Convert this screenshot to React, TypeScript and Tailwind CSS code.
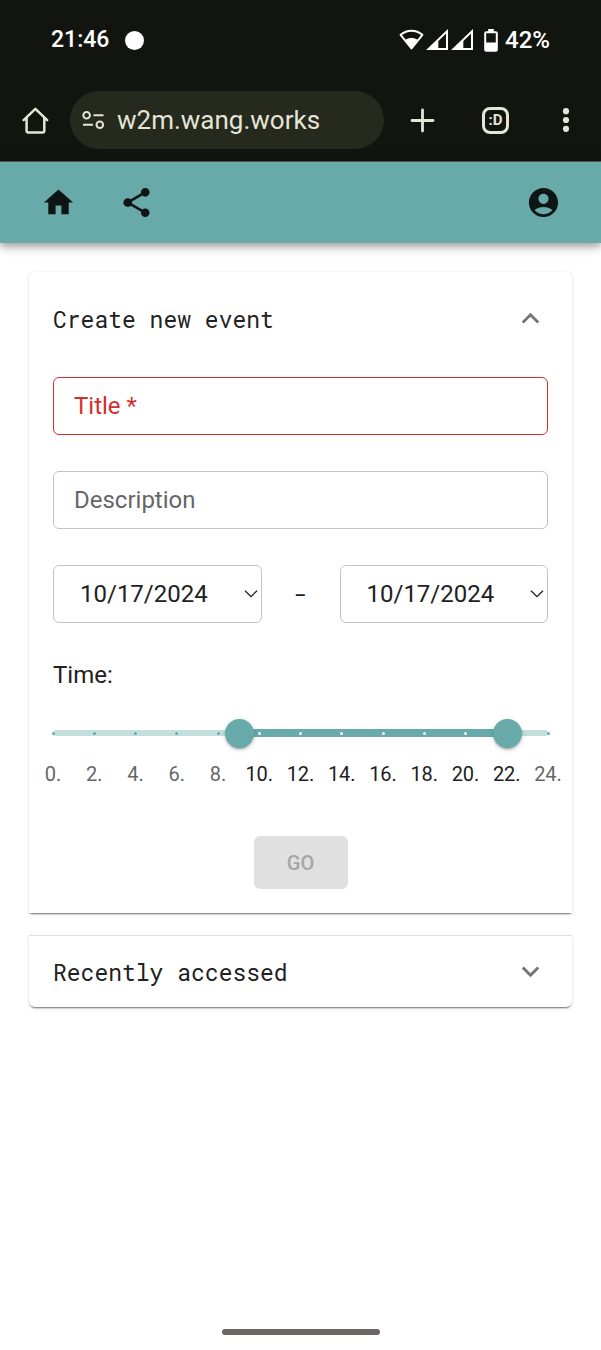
import { useState, type ReactNode } from "react";

const HOURS = [0, 2, 4, 6, 8, 10, 12, 14, 16, 18, 20, 22, 24];
const DATES = ["10/17/2024", "10/18/2024", "10/19/2024"];

function StatusBar() {
  return (
    <div className="flex h-20 items-center justify-between px-[51px] text-[23px] leading-8 font-medium text-white">
      <div className="flex items-center gap-4">
        <span>21:46</span>
        <span className="size-[19px] rounded-full bg-white" />
      </div>
      <div className="flex items-center">
        <svg className="h-[22px] w-[25px]" viewBox="0 0 25 22" aria-hidden="true">
          <path d="M1.6 5.8C8 .4 17 .4 23.4 5.8L12.500 19.500z" fill="none" stroke="#fff" strokeWidth="2" strokeLinejoin="round" />
          <path d="M6.400 10.800C9.800 8.400 15.200 8.400 18.600 10.800L12.500 19.500z" fill="#fff" />
        </svg>
        <SignalIcon />
        <SignalIcon />
        <svg className="ml-[10px] h-[23px] w-[14px]" viewBox="0 0 14 23" aria-hidden="true">
          <path d="M4.2 0h5.6v3H4.2z" fill="#fff" />
          <rect x="1.2" y="3.2" width="11.6" height="18.6" rx="1" fill="none" stroke="#fff" strokeWidth="2" />
          <path d="M1 13.5h12v8.3H1z" fill="#fff" />
        </svg>
        <span className="ml-[7px] text-[24px]">42%</span>
      </div>
    </div>
  );
}

function SignalIcon() {
  return (
    <svg className="ml-[2px] h-[22px] w-[23px]" viewBox="0 0 23 22" aria-hidden="true">
      <path d="M2.600 20 21 2.400V20z" fill="none" stroke="#fff" strokeWidth="2" />
      <path d="M1.500 20.500 12.300 10.500V20.500z" fill="#fff" />
    </svg>
  );
}

function BrowserBar() {
  return (
    <div className="flex items-center pt-[11px] pr-[22px] pb-3 pl-[20px] text-[#e4e5d6]">
      <button type="button" aria-label="Home page" className="mr-[19px] shrink-0">
        <svg className="size-[31px]" viewBox="0 0 31 31" fill="none" stroke="currentColor" strokeWidth="2.5" strokeLinejoin="round" strokeLinecap="round" aria-hidden="true">
          <path d="M3.6 15.2 15.4 3.900 27.200 15.200M6.600 12.800V26.200q0 1.200 1.200 1.200H23.100q1.200 0 1.200-1.200V12.800" />
        </svg>
      </button>
      <div className="flex h-[58px] min-w-0 flex-1 items-center gap-3 rounded-full bg-[#26291d] pr-4 pl-3">
        <svg className="h-[20px] w-[23px] shrink-0" viewBox="0 0 23 20" fill="none" stroke="currentColor" strokeWidth="2" aria-hidden="true">
          <circle cx="4.600" cy="5.300" r="3.300" />
          <path d="M11.500 5.300H21.500M1 14.800H11" />
          <circle cx="17.800" cy="14.800" r="3.300" />
        </svg>
        <input aria-label="Address" defaultValue="w2m.wang.works" className="min-w-0 flex-1 bg-transparent text-[26px] leading-9 outline-none" />
      </div>
      <button type="button" aria-label="New tab" className="ml-[26px] shrink-0">
        <svg className="size-[25px]" viewBox="0 0 25 25" stroke="currentColor" strokeWidth="2.8" strokeLinecap="round" aria-hidden="true">
          <path d="M12.5 2v21M2 12.5h21" />
        </svg>
      </button>
      <button type="button" aria-label="Switch tabs" className="ml-[47px] flex size-[27px] shrink-0 items-center justify-center rounded-[8px] border-[3px] border-current text-[15px] leading-none font-bold">
        :D
      </button>
      <button type="button" aria-label="More options" className="ml-[44px] w-[26px] shrink-0">
        <svg className="mx-auto h-[26px] w-[8px]" viewBox="0 0 8 26" fill="currentColor" aria-hidden="true">
          <circle cx="4" cy="4.2" r="3.1" />
          <circle cx="4" cy="13" r="3.1" />
          <circle cx="4" cy="21.8" r="3.1" />
        </svg>
      </button>
    </div>
  );
}

function AppBar() {
  return (
    <nav className="flex h-[81px] items-center bg-[#67aaa9] pr-10 pl-[41px] text-[#0d1615] shadow-[0_3px_6px_-1px_rgba(0,0,0,0.2),0_6px_7px_0_rgba(0,0,0,0.14),0_1px_15px_0_rgba(0,0,0,0.12)]">
      <a href="#home" aria-label="Home">
        <svg className="size-[35px]" viewBox="0 0 24 24" fill="currentColor" aria-hidden="true">
          <path d="M10 20v-6h4v6h5v-8h3L12 3 2 12h3v8z" />
        </svg>
      </a>
      <button type="button" aria-label="Share" className="ml-[43px]">
        <svg className="size-[35px]" viewBox="0 0 24 24" fill="currentColor" aria-hidden="true">
          <path d="M18 16.08c-.76 0-1.44.3-1.96.77L8.91 12.7c.05-.23.09-.46.09-.7s-.04-.47-.09-.7l7.05-4.11c.54.5 1.25.81 2.04.81 1.66 0 3-1.34 3-3s-1.34-3-3-3-3 1.34-3 3c0 .24.04.47.09.7L8.04 9.81C7.5 9.31 6.79 9 6 9c-1.66 0-3 1.34-3 3s1.34 3 3 3c.79 0 1.5-.31 2.04-.81l7.12 4.16c-.05.21-.08.43-.08.65 0 1.61 1.31 2.92 2.92 2.92s2.92-1.31 2.92-2.92-1.31-2.92-2.92-2.92" />
        </svg>
      </button>
      <button type="button" aria-label="Account" className="ml-auto">
        <svg className="size-[35px]" viewBox="0 0 24 24" fill="currentColor" aria-hidden="true">
          <path d="M12 2C6.48 2 2 6.48 2 12s4.48 10 10 10 10-4.48 10-10S17.52 2 12 2m0 4c1.93 0 3.5 1.57 3.5 3.5S13.93 13 12 13s-3.5-1.57-3.5-3.5S10.07 6 12 6m0 14c-2.03 0-4.43-.82-6.14-2.88C7.55 15.8 9.68 15 12 15s4.45.8 6.14 2.12C16.43 19.18 14.03 20 12 20" />
        </svg>
      </button>
    </nav>
  );
}

function PanelHeader({ title, open, onToggle }: { title: string; open: boolean; onToggle: () => void }) {
  return (
    <button
      type="button"
      aria-expanded={open}
      onClick={onToggle}
      className={`flex w-full items-center justify-between px-6 text-left font-['Roboto_Mono','DejaVu_Sans_Mono',monospace] text-[23px] leading-8 ${open ? "h-[93px]" : "h-[71px]"}`}
    >
      <span>{title}</span>
      <svg className={`size-[35px] text-[#757575] ${open ? "rotate-180" : ""}`} viewBox="0 0 24 24" fill="currentColor" aria-hidden="true">
        <path d="M16.59 8.59 12 13.17 7.41 8.59 6 10l6 6 6-6z" />
      </svg>
    </button>
  );
}

function TextField({ id, children, error }: { id: string; children: ReactNode; error?: boolean }) {
  return (
    <div className="relative">
      <input
        id={id}
        placeholder=" "
        required={error}
        className={`peer block h-[58px] w-full rounded-[6px] border px-5 outline-none ${error ? "border-[#d32f2f]" : "border-[#c4c4c4]"}`}
      />
      <label
        htmlFor={id}
        className={`pointer-events-none absolute top-[11px] left-[21px] peer-[:not(:placeholder-shown)]:hidden ${error ? "text-[#d32f2f]" : "text-[#666666]"}`}
      >
        {children}
      </label>
    </div>
  );
}

function DateSelect({ label }: { label: string }) {
  return (
    <div className="relative flex-1">
      <select aria-label={label} className="block h-[58px] w-full appearance-none rounded-[6px] border border-[#c4c4c4] bg-white pl-[26px] outline-none">
        {DATES.map((date) => (
          <option key={date}>{date}</option>
        ))}
      </select>
      <svg className="pointer-events-none absolute top-[24px] right-[4px] h-[10px] w-[14px]" viewBox="0 0 14 10" fill="none" stroke="#1f1f1f" strokeWidth="1.3" aria-hidden="true">
        <path d="M1 1.7 7 7.7 13 1.7" />
      </svg>
    </div>
  );
}

const THUMB_CLASSES =
  "pointer-events-none absolute top-0 -left-[14px] h-[30px] w-[calc(100%+29px)] appearance-none bg-transparent [&::-webkit-slider-thumb]:pointer-events-auto [&::-webkit-slider-thumb]:size-[29px] [&::-webkit-slider-thumb]:appearance-none [&::-webkit-slider-thumb]:rounded-full [&::-webkit-slider-thumb]:bg-[#67aaa9] [&::-webkit-slider-thumb]:shadow-[0_3px_2px_-2px_rgba(0,0,0,0.2),0_2px_3px_0_rgba(0,0,0,0.14),0_1px_6px_0_rgba(0,0,0,0.12)]";

function TimeRange() {
  const [from, setFrom] = useState(9);
  const [to, setTo] = useState(22);
  const inRange = (hour: number) => hour >= from && hour <= to;

  return (
    <div>
      <div className="relative flex h-[30px] items-center">
        <div className="h-[6px] w-full rounded-full bg-[#c3dfdc]" />
        <div
          className="absolute top-[11px] h-2 bg-[#67aaa9]"
          style={{ left: `${(from / 24) * 100}%`, width: `${((to - from) / 24) * 100}%` }}
        />
        <div className="absolute inset-x-0 top-0 flex h-[30px] items-center justify-between">
          {HOURS.map((hour) => (
            <span key={hour} className="flex w-0 justify-center">
              <span className={`size-[3px] shrink-0 rounded-full ${inRange(hour) ? "bg-[#f4faf9]" : "bg-[#67aaa9]"}`} />
            </span>
          ))}
        </div>
        <input type="range" aria-label="Start hour" min={0} max={24} value={from} onChange={(e) => setFrom(Math.min(Number(e.target.value), to))} className={THUMB_CLASSES} />
        <input type="range" aria-label="End hour" min={0} max={24} value={to} onChange={(e) => setTo(Math.max(Number(e.target.value), from))} className={THUMB_CLASSES} />
      </div>
      <div className="mt-[11px] flex justify-between text-[20px] leading-[30px]">
        {HOURS.map((hour) => (
          <span key={hour} className={`flex w-0 justify-center ${inRange(hour) ? "" : "text-[#666666]"}`}>
            {hour}.
          </span>
        ))}
      </div>
    </div>
  );
}

export default function App() {
  const [createOpen, setCreateOpen] = useState(true);
  const [recentOpen, setRecentOpen] = useState(false);

  return (
    <div className="flex min-h-screen flex-col bg-white font-[Roboto,sans-serif] text-[24px] leading-9 text-[#212121]">
      <header>
        <div className="border-b border-[#5c5a52] bg-[#12150f]">
          <StatusBar />
          <BrowserBar />
        </div>
        <AppBar />
      </header>

      <main className="flex flex-1 flex-col gap-[23px] px-[29px] pt-[29px]">
        <section className="rounded-t-[6px] bg-white shadow-[0_3px_2px_-2px_rgba(0,0,0,0.35),0_1px_1px_0_rgba(0,0,0,0.2),0_1px_4px_0_rgba(0,0,0,0.12)]">
          <PanelHeader title="Create new event" open={createOpen} onToggle={() => setCreateOpen(!createOpen)} />
          {createOpen && (
            <form className="flex flex-col px-6 pt-3 pb-6" onSubmit={(e) => e.preventDefault()}>
              <div className="flex flex-col gap-9">
                <TextField id="title" error>
                  Title *
                </TextField>
                <TextField id="description">Description</TextField>
                <div className="flex items-center">
                  <DateSelect label="Start date" />
                  <span className="w-[78px] text-center font-['Roboto_Mono',monospace]">-</span>
                  <DateSelect label="End date" />
                </div>
              </div>
              <p className="mt-[34px] mb-[25px]">Time:</p>
              <TimeRange />
              <button type="submit" disabled className="mt-[47px] h-[53px] w-[94px] self-center rounded-[6px] bg-[#e0e0e0] text-[20px] leading-9 font-medium text-[#a6a6a6]">
                GO
              </button>
            </form>
          )}
        </section>

        <section className="rounded-b-[6px] bg-white shadow-[0_-1px_0_0_#e0e0e0,0_3px_2px_-2px_rgba(0,0,0,0.35),0_1px_1px_0_rgba(0,0,0,0.2),0_1px_4px_0_rgba(0,0,0,0.12)]">
          <PanelHeader title="Recently accessed" open={recentOpen} onToggle={() => setRecentOpen(!recentOpen)} />
        </section>
      </main>

      <footer className="flex justify-center pb-[15px]">
        <div className="h-[6px] w-[158px] rounded-full bg-[#6b6767]" />
      </footer>
    </div>
  );
}
